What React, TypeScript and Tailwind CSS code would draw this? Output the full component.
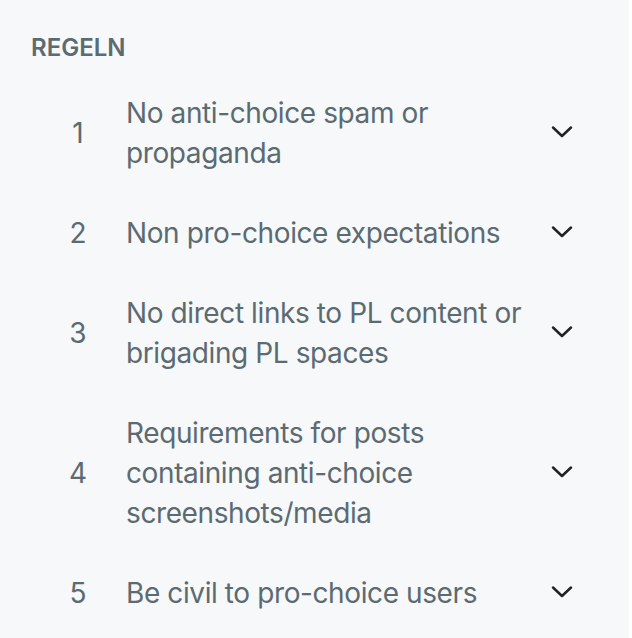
import React from "react";

const rules = [
  "No anti-choice spam or propaganda",
  "Non pro-choice expectations",
  "No direct links to PL content or brigading PL spaces",
  "Requirements for posts containing anti-choice screenshots/media",
  "Be civil to pro-choice users",
];

function Chevron() {
  return (
    <svg width="22" height="14" viewBox="0 0 22 14" fill="none">
      <polyline
        points="2,2.5 11,11 20,2.5"
        stroke="#1f2426"
        strokeWidth="2.5"
        strokeLinecap="round"
        strokeLinejoin="round"
      />
    </svg>
  );
}

export default function App() {
  return (
    <div
      className="flex w-[632px] h-[638px] bg-white overflow-hidden"
      style={{ fontFamily: "Inter, 'Noto Sans', sans-serif" }}
    >
      <div className="w-[629px] h-full bg-[#f6f8f9] flex flex-col">
        <div className="pl-[31px] pt-[32px] mb-[9px] text-[24px] leading-[32px] font-semibold text-[#5c6a72] uppercase">
          Regeln
        </div>
        {rules.map((r, i) => (
          <div key={i} className="flex items-center py-[20px]">
            <div className="ml-[62px] w-[32px] text-center text-[28px] leading-[40px] text-[#5c6a72]">
              {i + 1}
            </div>
            <div className="ml-[32px] w-[416px] text-[28px] leading-[40px] tracking-[-0.4px] text-[#5c6a72]">
              {r}
            </div>
            <div className="w-[40px] flex justify-center -mt-[2px]">
              <Chevron />
            </div>
          </div>
        ))}
      </div>
    </div>
  );
}
